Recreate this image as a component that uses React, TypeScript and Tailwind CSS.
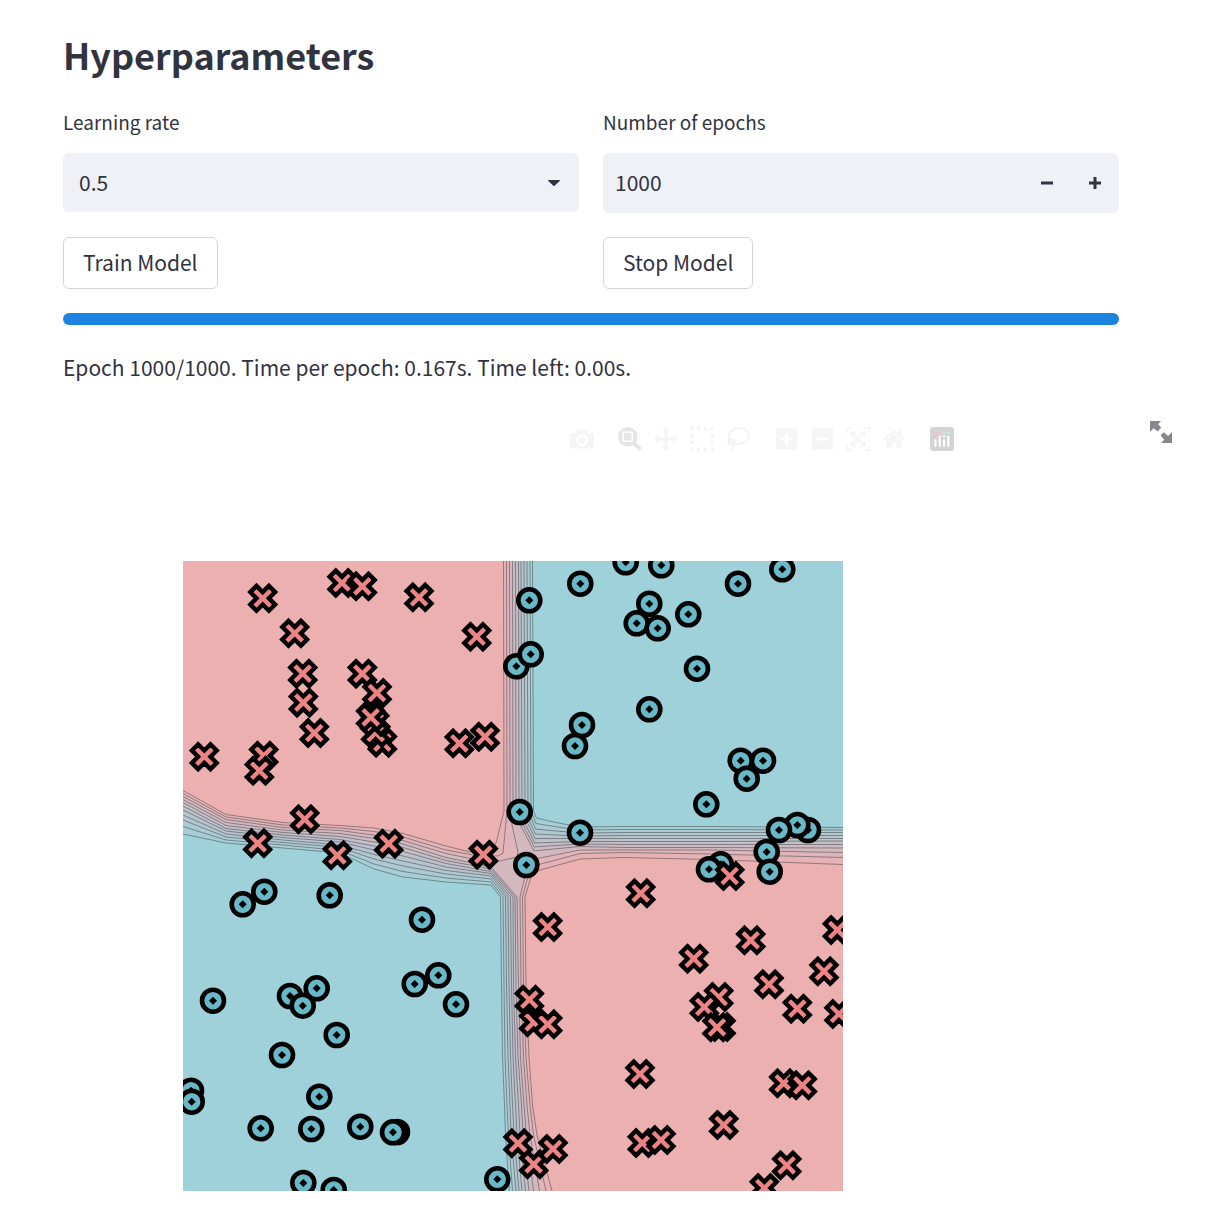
import React, { useState } from "react";

type Point = [number, number];

const LEVELS = [0, 1, 2, 3, 4, 5, 6, 7, 8, 9, 10];

const BAND_COLORS = [
  "#ecb0b1", "#e6b2b6", "#dfb5bb", "#d4b8c0", "#ccbbc4", "#c4bec8",
  "#bdc1cb", "#b7c4ce", "#b1c7d1", "#abcbd4", "#a5ced7", "#9fd1da",
];

/* Contour crossings per level, from the red class (0) to the blue class (10). */
const TOP_X = [503.5, 506.5, 509.5, 512.5, 515.5, 518.5, 521, 524, 527, 530, 532.5];
const NECK_X = [504, 507, 510, 513, 516, 519, 522, 525, 528, 531, 533.5];

const LEFT: { x: number; y: number[] }[] = [
  { x: 183, y: [790.5, 793.5, 796.5, 799.5, 802.5, 806, 810, 815, 820, 826.5, 834] },
  { x: 226, y: [814.5, 817, 819.5, 822.5, 825.5, 828.5, 831, 834, 837, 840, 843] },
  { x: 283, y: [822.5, 825, 827.5, 830, 832.5, 835, 837.5, 840, 842.5, 845, 848] },
  { x: 340, y: [825.5, 828, 830.5, 833.5, 836.5, 839.5, 842, 845, 847.5, 850.5, 853] },
  { x: 374, y: [828, 831.5, 835, 838.5, 842, 846, 850, 854.5, 859, 864, 869] },
  { x: 403, y: [833.5, 837, 840.5, 844, 847.5, 851.5, 856, 861, 866, 871.5, 877] },
  { x: 446, y: [846, 850, 853.5, 857.5, 860.5, 863.5, 867, 870.5, 874, 878, 882] },
];

const BOTTOM: { y: number; x: number[] }[] = [
  { y: 897, x: [525, 522.5, 520, 517, 515, 513, 510.5, 508, 505.5, 503, 500.5] },
  { y: 985, x: [526, 523.5, 521, 518.5, 516, 513.5, 511.5, 509, 506.5, 504, 501.5] },
  { y: 1057, x: [529, 526, 523.5, 520.5, 518, 515.5, 513, 510.5, 508, 505, 502.5] },
  { y: 1105, x: [532.5, 530, 527, 524, 521.5, 518.5, 515.5, 512.5, 510, 507, 504.5] },
  { y: 1135, x: [537, 533.5, 530, 526.5, 523, 520, 517, 514, 511, 508.5, 505.5] },
  { y: 1191, x: [552, 546, 539.5, 533.5, 529, 525.5, 522, 519, 516, 512.5, 509.5] },
];

const RIGHT: { x: number; y: number[] }[] = [
  { x: 580, y: [859, 853.5, 850, 846.5, 844, 841.5, 838.5, 836, 833, 830, 827] },
  { x: 623, y: [857.5, 852.5, 850, 847.5, 844.5, 841.5, 838.5, 835.5, 832.5, 829.5, 826.5] },
  { x: 710, y: [859.5, 854, 850, 847.5, 844.5, 841.5, 838.5, 835.5, 832.5, 829.5, 826.5] },
  { x: 843, y: [864.5, 857.5, 852.5, 848, 844.5, 841, 838.5, 835.5, 832.5, 830, 827.5] },
];

const NW_CORNERS: Point[][] = [
  [[470, 852], [487, 854], [496, 843]],
  [[473, 855], [498, 856], [503, 853]],
  [[473, 859], [500, 861], [517, 857], [518, 852], [512, 825]],
];

const SE_CORNERS: Point[][] = [
  [[531, 877], [540, 870]],
  [[528, 876], [537, 865]],
  [[525, 876], [535, 859]],
];

const leftPart = (i: number): Point[] => LEFT.map((s) => [s.x, s.y[i]]);
const downPart = (i: number): Point[] => BOTTOM.map((s) => [s.x[i], s.y]);
const rightPart = (i: number): Point[] => RIGHT.map((s) => [s.x, s.y[i]]);

const northWest = (i: number): Point[] => [...leftPart(i), ...NW_CORNERS[i], [NECK_X[i], 811], [TOP_X[i], 561]];
const southEast = (i: number): Point[] => [...rightPart(i).reverse(), ...SE_CORNERS[i].slice().reverse(), ...downPart(i)];

const SW_CORNER_Y = [867, 869, 871.5, 873.5, 876, 879, 882, 885];
const NE_CORNER_Y = [851, 847, 843, 838.5, 834, 829, 823.5, 818];

const southWest = (i: number): Point[] => [...leftPart(i), [491, SW_CORNER_Y[i - 3]], ...downPart(i)];
const northEast = (i: number): Point[] => [
  [TOP_X[i], 561],
  [NECK_X[i], 811],
  [534 + (i - 3) / 3, NE_CORNER_Y[i - 3]],
  [556, (NE_CORNER_Y[i - 3] + RIGHT[0].y[i]) / 2],
  ...rightPart(i),
];

const toPath = (pts: Point[], close = false) => "M" + pts.map((p) => p.join(",")).join("L") + (close ? "Z" : "");

const regions = LEVELS.flatMap((i) =>
  i < 3
    ? [{ i, d: toPath([...northWest(i), [843, 561], ...southEast(i), [183, 1191]], true) }]
    : [
        { i, d: toPath([...northEast(i), [843, 561]], true) },
        { i, d: toPath([...southWest(i), [183, 1191]], true) },
      ]
);

const contours = LEVELS.flatMap((i) =>
  i < 3 ? [toPath(northWest(i)), toPath(southEast(i))] : [toPath(northEast(i)), toPath(southWest(i))]
);

const CIRCLES: Point[] = [
  [529.3, 600.3], [580.3, 583.7], [516.3, 666.3], [530.7, 654.3], [582, 725], [575, 746],
  [625.7, 562.3], [661.3, 565.3], [782.3, 569.3], [738, 583.7], [649.3, 603.7], [636.7, 623.3],
  [657.7, 628.3], [688.3, 614.3], [697, 668.7], [649.3, 709.3], [740.7, 760.7], [763, 760.7],
  [746.7, 778.7], [706.3, 804.3], [808, 830], [797.3, 825], [779, 830], [766.7, 852],
  [769.7, 871.7], [720.7, 864.3], [709, 869.3], [242.7, 904.3], [264.3, 891.7], [329.7, 895.3],
  [519.7, 812], [580, 832.7], [526.3, 865], [422, 919.7], [414.7, 984], [438.3, 975.3],
  [213, 1000.7], [290, 996], [316.7, 988.3], [302.7, 1005.7], [336.7, 1035], [282, 1055],
  [191, 1090.7], [191.7, 1101.7], [319.3, 1096.7], [260.7, 1128.3], [311.3, 1129], [360.3, 1126.7],
  [397, 1132], [393, 1132.3], [303.3, 1183], [333.7, 1190], [456, 1004.3], [497.3, 1179.3],
];

const CROSSES: Point[] = [
  [262.7, 598.3], [342, 583], [362.3, 586.3], [294.7, 633.3], [302.7, 673.7], [303.3, 702.7],
  [314.3, 733], [204.3, 756.7], [263.7, 755.7], [259.3, 770.7], [362.3, 673.7], [377, 693],
  [382.3, 742.7], [375.7, 733], [374.7, 722], [370.7, 717.3], [419, 597.3], [476.7, 636.7],
  [459.3, 743.3], [485, 736.7], [304.7, 819.3], [257.7, 843.3], [337.3, 855.3], [388.7, 843.7],
  [483.3, 854.7], [547.7, 927], [729.7, 876], [640.7, 893.3], [750.7, 940.3], [693.7, 958.7],
  [837.3, 930], [824, 971.3], [769, 984.3], [533.7, 1022.3], [529.3, 999.7], [547.7, 1024.3],
  [533.7, 1164.3], [518, 1143.3], [553, 1149], [718.7, 997], [704.3, 1007], [721, 1027],
  [717, 1027.3], [797.3, 1008.7], [839, 1014], [640, 1074], [783.7, 1083.3], [802.3, 1085.3],
  [723.7, 1125], [642.3, 1143], [661, 1140], [764.3, 1188], [786.7, 1165.3],
];

const CROSS = "m0 6.2l6.2 6.2l6.2-6.2l-6.2-6.2l6.2-6.2l-6.2-6.2l-6.2 6.2l-6.2-6.2l-6.2 6.2l6.2 6.2l-6.2 6.2l6.2 6.2z";

function DecisionPlot() {
  return (
    <svg viewBox="183 561 660 630" className="block w-[660px] shrink-0" role="img" aria-label="Decision boundary">
      <rect x="183" y="561" width="660" height="630" fill={BAND_COLORS[0]} />
      {regions.map((r, k) => (
        <path key={k} d={r.d} fill={BAND_COLORS[r.i + 1]} />
      ))}
      {contours.map((d, k) => (
        <path key={k} d={d} fill="none" stroke="#444" strokeOpacity="0.65" strokeWidth="0.8" />
      ))}
      {CIRCLES.map(([x, y], k) => (
        <g key={k} transform={`translate(${x} ${y})`}>
          <circle r="11" fill="#69b8c8" stroke="#000" strokeWidth="4.6" />
          <path d="M0-4L4 0L0 4L-4 0z" />
        </g>
      ))}
      {CROSSES.map(([x, y], k) => (
        <path key={k} transform={`translate(${x} ${y})`} d={CROSS} fill="#ec8484" stroke="#000" strokeWidth="4.4" />
      ))}
    </svg>
  );
}

function ToolButton({ label, width = 1000, d, tone = "fill-[#f5f5f5]", children }: {
  label: string;
  width?: number;
  d?: string;
  tone?: string;
  children?: React.ReactNode;
}) {
  return (
    <button type="button" aria-label={label} className="flex size-6 items-center justify-center">
      <svg viewBox={`0 0 ${width} 1000`} className={`h-6 ${tone}`}>
        {d ? <path d={d} transform="matrix(1 0 0 -1 0 850)" /> : children}
      </svg>
    </button>
  );
}

const ICONS = {
  camera:
    "m500 450c-83 0-150-67-150-150 0-83 67-150 150-150 83 0 150 67 150 150 0 83-67 150-150 150z m400 150h-120c-16 0-34 13-39 29l-31 93c-6 15-23 28-40 28h-340c-16 0-34-13-39-28l-31-94c-6-15-23-28-40-28h-120c-55 0-100-45-100-100v-450c0-55 45-100 100-100h800c55 0 100 45 100 100v450c0 55-45 100-100 100z m-400-550c-138 0-250 112-250 250 0 138 112 250 250 250 138 0 250-112 250-250 0-138-112-250-250-250z m365 380c-19 0-35 16-35 35 0 19 16 35 35 35 19 0 35-16 35-35 0-19-16-35-35-35z",
  zoom: "m1000-25l-250 251c40 63 63 138 63 218 0 224-182 406-407 406-224 0-406-182-406-406s183-406 407-406c80 0 155 22 218 62l250-250 125 125z m-812 250l0 438 437 0 0-438-437 0z m62 375l313 0 0-312-313 0 0 312z",
  pan: "m1000 350l-187 188 0-125-250 0 0 250 125 0-188 187-187-187 125 0 0-250-250 0 0 125-188-188 186-187 0 125 252 0 0-250-125 0 187-188 188 188-125 0 0 250 250 0 0-126 187 188z",
  plus: "m1 787l0-875 875 0 0 875-875 0z m687-500l-187 0 0-187-125 0 0 187-188 0 0 125 188 0 0 187 125 0 0-187 187 0 0-125z",
  minus: "m0 788l0-876 876 0 0 876-876 0z m688-500l-500 0 0 125 500 0 0-125z",
  autoscale:
    "m250 850l-187 0-63 0 0-62 0-188 63 0 0 188 187 0 0 62z m688 0l-188 0 0-62 188 0 0-188 62 0 0 188 0 62-62 0z m-875-938l0 188-63 0 0-188 0-62 63 0 187 0 0 62-187 0z m875 188l0-188-188 0 0-62 188 0 62 0 0 62 0 188-62 0z m-125 188l-1 0-93-94-156 156 156 156 92-93 2 0 0 250-250 0 0-2 93-92-156-156-156 156 94 92 0 2-250 0 0-250 0 0 93 93 157-156-157-156-93 94 0 0 0-250 250 0 0 0-94 93 156 157 156-157-93-93 0 0 250 0 0 250z",
  home: "m786 296v-267q0-15-11-26t-25-10h-214v214h-143v-214h-214q-15 0-25 10t-11 26v267q0 1 0 2t0 2l321 264 321-264q1-1 1-4z m124 39l-34-41q-5-5-12-6h-2q-7 0-12 3l-386 322-386-322q-7-4-13-4-7 2-12 7l-35 41q-4 5-3 13t6 12l401 334q18 15 42 15t43-15l136-114v109q0 8 5 13t13 5h107q8 0 13-5t5-13v-227l122-102q5-5 6-12t-4-13z",
};

const STEPS = [0, 1, 2, 3, 4, 5, 6];

function Toolbar() {
  return (
    <div className="flex w-[771px] justify-end gap-6 pt-4" role="toolbar" aria-label="Chart tools">
      <ToolButton label="Download plot as a png" d={ICONS.camera} />
      <div className="flex gap-3">
        <ToolButton label="Zoom" d={ICONS.zoom} tone="fill-[#e6e6e6]" />
        <ToolButton label="Pan" d={ICONS.pan} />
        <ToolButton label="Box Select">
          {STEPS.flatMap((r) =>
            STEPS.filter((c) => ((r === 0 || r === 6) && c % 2 === 0) || ((c === 0 || c === 6) && r % 2 === 0)).map((c) => (
              <rect key={`${r}-${c}`} x={c * 143} y={r * 143} width="143" height="143" />
            ))
          )}
        </ToolButton>
        <ToolButton label="Lasso Select">
          <g fill="none" stroke="#f2f2f2" strokeWidth="72">
            <ellipse cx="530" cy="380" rx="430" ry="325" transform="rotate(-10 530 380)" />
            <ellipse cx="235" cy="640" rx="135" ry="120" />
            <path d="M335 720Q350 830 215 960" />
          </g>
        </ToolButton>
      </div>
      <div className="flex gap-3">
        <ToolButton label="Zoom in" width={875} d={ICONS.plus} />
        <ToolButton label="Zoom out" width={875} d={ICONS.minus} />
        <ToolButton label="Autoscale" d={ICONS.autoscale} />
        <ToolButton label="Reset axes" width={928} d={ICONS.home} />
      </div>
      <ToolButton label="Produced with Plotly">
        <rect width="1000" height="1000" rx="120" fill="#d3d3d3" />
        {[0, 1, 2, 3].map((c) => (
          <g key={c}>
            <circle cx={225 + c * 180} cy="225" r="50" fill={c < 2 ? "#eebfce" : "#c9eaf0"} />
            {c % 2 === 0 && <circle cx={225 + c * 180} cy="390" r="50" fill={c === 0 ? "#eebfce" : "#fff"} />}
            <rect x={180 + c * 180} y={c % 2 === 0 ? 510 : 350} width="90" height={c % 2 === 0 ? 320 : 480} rx="45" fill="#fff" />
          </g>
        ))}
      </ToolButton>
    </div>
  );
}

export default function App() {
  const [rate, setRate] = useState("0.5");
  const [epochs, setEpochs] = useState(1000);

  return (
    <main className="min-h-screen overflow-hidden bg-white pt-[30px] pr-[88px] pb-[22px] pl-[63px] font-['Noto_Sans_CJK_SC',sans-serif] text-[21px] text-[#31333f]">
      <h2 className="text-[36px] leading-[48px] font-bold">Hyperparameters</h2>

      <div className="mt-[29px] grid grid-cols-2 gap-x-6">
        <label htmlFor="rate" className="text-[19px] leading-[30px]">Learning rate</label>
        <label htmlFor="epochs" className="text-[19px] leading-[30px]">Number of epochs</label>
      </div>

      <div className="mt-4 grid grid-cols-2 items-start gap-6">
        <div className="relative">
          <select
            id="rate"
            value={rate}
            onChange={(e) => setRate(e.target.value)}
            className="block h-[59px] w-full appearance-none rounded-md bg-[#f0f1f6] px-4"
          >
            <option>0.01</option>
            <option>0.1</option>
            <option>0.5</option>
            <option>1.0</option>
          </select>
          <svg viewBox="0 0 12 6" className="pointer-events-none absolute top-[27px] right-[19px] h-1.5 w-3 fill-[#31333f]">
            <path d="M0.6 0h10.8q0.8 0.2 0.3 0.9L6.6 5.7q-0.6 0.5-1.2 0L0.3 0.9Q-0.2 0.2 0.6 0z" />
          </svg>
        </div>
        <div className="flex h-[60px] overflow-hidden rounded-md bg-[#f0f1f6]">
          <input
            id="epochs"
            type="number"
            value={epochs}
            onChange={(e) => setEpochs(Number(e.target.value))}
            className="min-w-0 flex-1 [appearance:textfield] bg-transparent px-3 [&::-webkit-inner-spin-button]:appearance-none"
          />
          <button type="button" aria-label="Decrease" onClick={() => setEpochs(epochs - 1)} className="flex w-12 items-center justify-center">
            <svg viewBox="0 0 12 12" className="size-3 fill-[#31333f]"><path d="M0 4.5h12v3H0z" /></svg>
          </button>
          <button type="button" aria-label="Increase" onClick={() => setEpochs(epochs + 1)} className="flex w-12 items-center justify-center">
            <svg viewBox="0 0 12 12" className="size-3 fill-[#31333f]"><path d="M0 4.5h4.5V0h3v4.5H12v3H7.5V12h-3V7.5H0z" /></svg>
          </button>
        </div>
        <button type="button" className="h-[52px] justify-self-start rounded-md border border-[#d6d6d9] px-[19px]">Train Model</button>
        <button type="button" className="h-[52px] justify-self-start rounded-md border border-[#d6d6d9] px-[19px]">Stop Model</button>
      </div>

      <div role="progressbar" aria-label="Training progress" aria-valuenow={100} aria-valuemin={0} aria-valuemax={100} className="mt-6 h-3 rounded-full bg-[#1c83e1]" />

      <p className="mt-6 leading-9">Epoch 1000/1000. Time per epoch: 0.167s. Time left: 0.00s.</p>

      <section className="relative mt-[26px] pl-[120px]">
        <Toolbar />
        <button type="button" aria-label="View fullscreen" className="absolute top-2.5 -right-[53px]">
          <svg viewBox="0 0 22 22" className="size-[22px] fill-[#85888e]">
            <path d="M0 0h11L8 3.3l3.2 3.2-3.5 4L3.6 7.2 0 11z" />
            <path d="M22 22H11l3.3-3.3-3-3.2q-0.8-1 0-2l1.6-1.6q1-0.8 2 0l3.2 3L22 11z" />
          </svg>
        </button>
        <div className="pt-[110px]">
          <DecisionPlot />
        </div>
      </section>
    </main>
  );
}
